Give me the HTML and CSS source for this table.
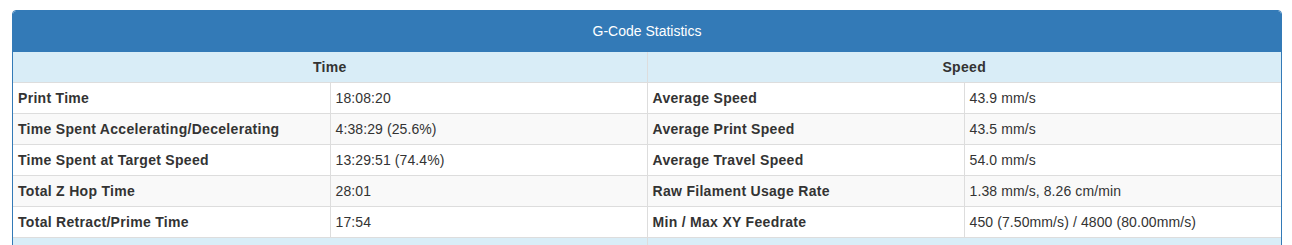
FILE: index.html
```html
<!DOCTYPE html>
<html>
<head>
<meta charset="utf-8">
<link rel="stylesheet" href="styles.css">
</head>
<body>
<div class="page">
  <div class="panel">
    <div class="panel-heading">G-Code Statistics</div>
    <table class="stats">
      <colgroup><col><col><col><col></colgroup>
      <tbody>
        <tr class="info"><th colspan="2">Time</th><th colspan="2">Speed</th></tr>
        <tr><th>Print Time</th><td>18:08:20</td><th>Average Speed</th><td>43.9 mm/s</td></tr>
        <tr><th>Time Spent Accelerating/Decelerating</th><td>4:38:29 (25.6%)</td><th>Average Print Speed</th><td>43.5 mm/s</td></tr>
        <tr><th>Time Spent at Target Speed</th><td>13:29:51 (74.4%)</td><th>Average Travel Speed</th><td>54.0 mm/s</td></tr>
        <tr><th>Total Z Hop Time</th><td>28:01</td><th>Raw Filament Usage Rate</th><td>1.38 mm/s, 8.26 cm/min</td></tr>
        <tr><th>Total Retract/Prime Time</th><td>17:54</td><th>Min / Max XY Feedrate</th><td>450 (7.50mm/s) / 4800 (80.00mm/s)</td></tr>
        <tr class="info"><th colspan="2">&nbsp;</th><th colspan="2">&nbsp;</th></tr>
      </tbody>
    </table>
  </div>
</div>
</body>
</html>
```

FILE: styles.css
```css
html, body {
  margin: 0;
  padding: 0;
  background: #fff;
}
body {
  font-family: "Liberation Sans", Arial, Helvetica, sans-serif;
  font-size: 14px;
  line-height: 20px;
  color: #333;
}
.page {
  padding: 10px 10px 0 12px;
}
.panel {
  border: 1px solid #337ab7;
  border-radius: 4px;
  overflow: hidden;
  background: #fff;
}
.panel-heading {
  background: #337ab7;
  color: #fff;
  text-align: center;
  padding: 10px 15px;
  border-bottom: 1px solid #337ab7;
  border-radius: 3px 3px 0 0;
}
.stats {
  width: 100%;
  border-collapse: collapse;
  table-layout: fixed;
}
.stats col {
  width: 25%;
}
.stats th,
.stats td {
  padding: 5px;
  border: 1px solid #ddd;
  text-align: left;
  vertical-align: top;
  white-space: nowrap;
}
.stats th {
  font-weight: bold;
  letter-spacing: 0.3px;
}
.stats td {
  letter-spacing: 0.1px;
}
.stats tr:first-child th,
.stats tr:first-child td {
  border-top: 0;
}
.stats th:first-child {
  border-left: 0;
}
.stats td:last-child,
.stats th:last-child {
  border-right: 0;
}
.stats tr:nth-child(odd) {
  background: #f9f9f9;
}
.stats tr.info {
  background: #d9edf7;
}
.stats tr.info th {
  text-align: center;
}
```
